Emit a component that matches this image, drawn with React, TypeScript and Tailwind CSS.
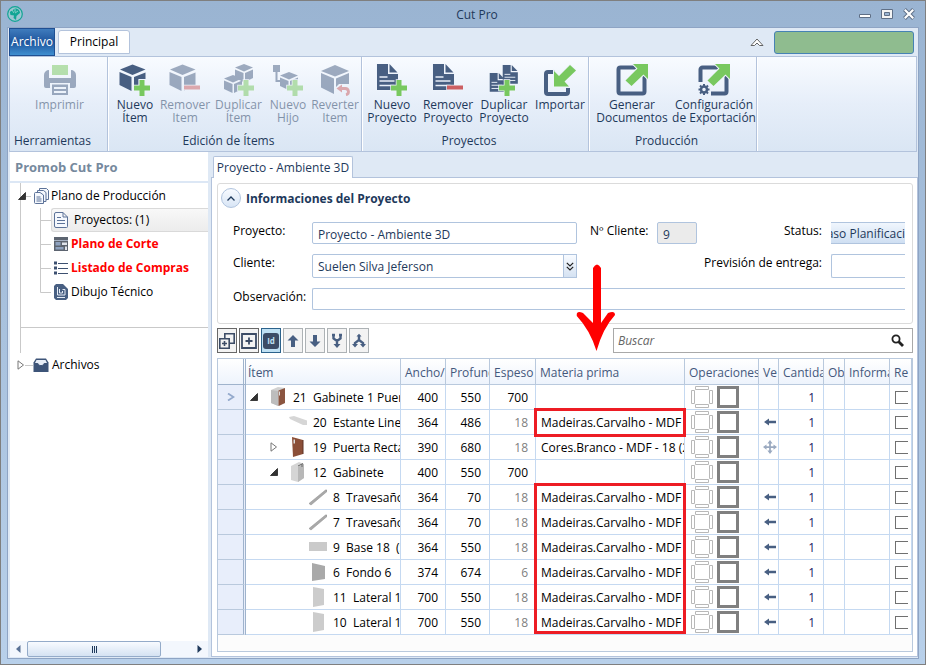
import type { ReactNode } from "react";

const NAVY = "#485f82";
const GREEN = "#78c85f";
const RED = "#cc5f62";

function Cube({ cut = false }: { cut?: boolean }) {
  return (
    <g fill={NAVY}>
      <path d="M13.500 0.500 26.500 5.500 13.500 11 1 5.500z" />
      <path d="M0.500 8 12.500 13v14L0.500 21z" />
      {cut ? <path d="M15 13 26.500 8.500V15h-7v6H15z" /> : <path d="M15 13 26.500 8.500V21L15 26.500z" />}
    </g>
  );
}

function SmallCube({ x, y }: { x: number; y: number }) {
  return (
    <g transform={`translate(${x} ${y})`} fill={NAVY}>
      <path d="M9 0 18 3.500 9 7.500 0 3.500z" />
      <path d="M0 5.500 8.500 9v9L0 14z" />
      <path d="M10 9l8-3.500v8.500L10 18z" />
    </g>
  );
}

function Sheet({ scale = 1, x = 0, y = 0 }: { scale?: number; x?: number; y?: number }) {
  return (
    <g transform={`translate(${x} ${y}) scale(${scale})`}>
      <path d="M1 0h11v10h10v16H1z" fill={NAVY} stroke="#eef4fb" strokeWidth="1.500" paintOrder="stroke" />
      <path d="M13.500 0 21.500 8.500h-8z" fill={NAVY} />
      <path d="M3.500 13h8M3.500 17h15M3.500 21.500h15" stroke="#e9f0f9" strokeWidth="1.300" fill="none" />
    </g>
  );
}

function Plus({ x = 15, y = 16 }: { x?: number; y?: number }) {
  return (
    <g transform={`translate(${x} ${y})`}>
      <path d="M5.500 0h5v5.500H16v5h-5.500V16h-5v-5.500H0v-5h5.500z" fill={GREEN} stroke="#eef4fb" strokeWidth="1.500" paintOrder="stroke" />
    </g>
  );
}

function Minus() {
  return <path d="M15 21.500h16v4H15z" fill={RED} stroke="#eef4fb" strokeWidth="1.500" paintOrder="stroke" />;
}

function ExportArrow() {
  return <path d="M17 0h15v15l-4.500-4.500L15.500 22 9.500 16.500 21.500 4.500z" fill={GREEN} stroke="#eef4fb" strokeWidth="2" paintOrder="stroke" />;
}

function RibbonIcon({ children }: { children: ReactNode }) {
  return (
    <svg viewBox="0 0 32 32" className="h-8 w-8 shrink-0" aria-hidden="true">
      {children}
    </svg>
  );
}

const icons = {
  print: (
    <>
      <path d="M8 1h16v10H8z" fill={GREEN} />
      <path d="M0 11a5 5 0 0 1 5-5v8h22V6a5 5 0 0 1 5 5v11a2 2 0 0 1-2 2h-4v-5H6v5H2a2 2 0 0 1-2-2z" fill={NAVY} />
      <path d="M8 20.500h16V31H8z" fill={NAVY} />
      <path d="M10 24h12M10 28h12" stroke="#eef4fb" strokeWidth="2" />
    </>
  ),
  newItem: (
    <>
      <Cube cut />
      <Plus />
    </>
  ),
  removeItem: (
    <>
      <Cube />
      <Minus />
    </>
  ),
  duplicateItem: (
    <>
      <SmallCube x={12} y={0} />
      <SmallCube x={1} y={11} />
      <Plus />
    </>
  ),
  child: (
    <>
      <path d="M1 1h7v7H1z" fill={NAVY} />
      <path d="M4.500 7v10H9" fill="none" stroke={NAVY} strokeWidth="2" />
      <SmallCube x={8} y={8} />
      <Plus />
    </>
  ),
  revert: (
    <>
      <path d="M16 1 30 7 16 12.500 2 7z" fill={NAVY} />
      <path d="M2 9l13 5.500V30L2 23.500z" fill={NAVY} />
      <path d="M17 14.500 30 9v11H20l-3 3z" fill={NAVY} />
      <path d="M21 24.500h5a3.200 3.200 0 0 1 1 6.300" fill="none" stroke={RED} strokeWidth="2.800" />
      <path d="M17.500 24.500l5.500-4v8z" fill={RED} />
    </>
  ),
  newProject: (
    <>
      <Sheet />
      <Plus />
    </>
  ),
  removeProject: (
    <>
      <Sheet />
      <Minus />
    </>
  ),
  duplicateProject: (
    <>
      <Sheet scale={0.72} x={14} y={1} />
      <Sheet scale={0.72} x={1} y={9} />
      <Plus x={11} />
    </>
  ),
  import: (
    <>
      <path d="M11 8H4a2 2 0 0 0-2 2v18a2 2 0 0 0 2 2h18a2 2 0 0 0 2-2v-4" fill="none" stroke={NAVY} strokeWidth="4" />
      <path d="M26 1l6 5.500-11.500 11 4.500 5H10V7l5 5z" fill={GREEN} stroke="#eef4fb" strokeWidth="2" paintOrder="stroke" />
    </>
  ),
  generate: (
    <>
      <rect x="2.500" y="3.500" width="26" height="26" rx="2" fill="none" stroke={NAVY} strokeWidth="4" />
      <ExportArrow />
    </>
  ),
  configure: (
    <>
      <path d="M2.500 18V5.500a2 2 0 0 1 2-2h22a2 2 0 0 1 2 2v22a2 2 0 0 1-2 2H13" fill="none" stroke={NAVY} strokeWidth="4" />
      <ExportArrow />
      <circle cx="6" cy="25.500" r="3" fill="none" stroke={NAVY} strokeWidth="2.500" />
      <path d="M6 20v2M6 29v2M.5 25.500h2M9.500 25.500h2M2 21.500l1.500 1.500M8.500 28l1.500 1.500M10 21.500 8.500 23M3.500 28 2 29.500" stroke={NAVY} strokeWidth="2" />
    </>
  ),
};

type RibbonAction = {
  icon: keyof typeof icons;
  lines: string[];
  width: string;
  disabled?: boolean;
};

const ribbonGroups: { title: string; width: string; actions: RibbonAction[] }[] = [
  {
    title: "Herramientas",
    width: "w-[98px]",
    actions: [{ icon: "print", lines: ["Imprimir"], width: "w-[94px]", disabled: true }],
  },
  {
    title: "Edición de Ítems",
    width: "w-[254px]",
    actions: [
      { icon: "newItem", lines: ["Nuevo", "Ítem"], width: "w-[50px]" },
      { icon: "removeItem", lines: ["Remover", "Item"], width: "w-[50px]", disabled: true },
      { icon: "duplicateItem", lines: ["Duplicar", "Ítem"], width: "w-[57px]", disabled: true },
      { icon: "child", lines: ["Nuevo", "Hijo"], width: "w-[42px]", disabled: true },
      { icon: "revert", lines: ["Reverter", "Item"], width: "w-[52px]", disabled: true },
    ],
  },
  {
    title: "Proyectos",
    width: "w-[227px]",
    actions: [
      { icon: "newProject", lines: ["Nuevo", "Proyecto"], width: "w-[56px]" },
      { icon: "removeProject", lines: ["Remover", "Proyecto"], width: "w-[56px]" },
      { icon: "duplicateProject", lines: ["Duplicar", "Proyecto"], width: "w-[56px]" },
      { icon: "import", lines: ["Importar"], width: "w-[56px]" },
    ],
  },
  {
    title: "Producción",
    width: "w-[168px]",
    actions: [
      { icon: "generate", lines: ["Generar", "Documentos"], width: "w-[81px]" },
      { icon: "configure", lines: ["Configuración", "de Exportación"], width: "w-[83px]" },
    ],
  },
];

function RibbonButton({ action }: { action: RibbonAction }) {
  return (
    <button
      type="button"
      disabled={action.disabled}
      className={`flex shrink-0 flex-col items-center gap-0.5 whitespace-nowrap leading-[13px] ${action.width} ${action.disabled ? "opacity-50" : ""}`}
    >
      <RibbonIcon>{icons[action.icon]}</RibbonIcon>
      <span>
        {action.lines.map((line) => (
          <span key={line} className="block">
            {line}
          </span>
        ))}
      </span>
    </button>
  );
}

function Ribbon() {
  return (
    <div className="mx-px flex h-24 border border-[#b3c3dc] bg-linear-to-b from-[#f8fbff] via-[#e6eef9] to-[#dae6f4] text-[#1e395b]">
      {ribbonGroups.map((group) => (
        <div key={group.title} className={`flex shrink-0 flex-col justify-between border-r border-[#b3c3dc] pt-[7px] pb-0.5 pl-0.5 shadow-[1px_0_0_#ffffff] ${group.width}`}>
          <div className="flex justify-center">
            {group.actions.map((action) => (
              <RibbonButton key={action.icon} action={action} />
            ))}
          </div>
          <div className="pr-3.5 text-center leading-4">{group.title}</div>
        </div>
      ))}
    </div>
  );
}

function TitleBar() {
  return (
    <header className="flex h-[26px] items-center pr-2.5 pl-1.5 text-[#1e395b]">
      <svg viewBox="0 0 16 16" className="h-4 w-4" aria-hidden="true">
        <circle cx="8" cy="8" r="7.300" fill="#9cc6d2" stroke="#12a594" strokeWidth="1.200" />
        <path d="M8 2.500c3 0 5 2 5 4.500L9.500 10 9 14 6.500 12 7 9.500 3.500 9 2.800 6z" fill="#12a594" />
        <path d="M5 4l2 3M8 3v3M11 5 8 7" stroke="#b6e2dc" strokeWidth=".7" />
      </svg>
      <h1 className="flex-1 pt-0.5 pl-[72px] text-center">Cut Pro</h1>
      <div className="flex items-center gap-2.5">
        <button type="button" aria-label="Minimizar">
          <svg viewBox="0 0 12 12" className="h-3 w-3">
            <path d="M.5 6.500h11v3H.5z" fill="#fff" stroke="#5f6f86" />
          </svg>
        </button>
        <button type="button" aria-label="Maximizar">
          <svg viewBox="0 0 12 12" className="h-3 w-3">
            <path d="M.5 1.500h11v9H.5z" fill="#f4f4f4" stroke="#5f6f86" />
            <path d="M3.500 4.500h5v3h-5z" fill="#9ab4d2" stroke="#5f6f86" />
          </svg>
        </button>
        <button type="button" aria-label="Cerrar">
          <svg viewBox="0 0 12 12" className="h-3 w-3">
            <path d="M1.500 1.500l9 9M10.500 1.500l-9 9" stroke="#5f6f86" strokeWidth="4" />
            <path d="M1.800 1.800l8.400 8.400M10.200 1.800l-8.400 8.400" stroke="#fff" strokeWidth="2.200" />
          </svg>
        </button>
      </div>
    </header>
  );
}

function RibbonTabs() {
  return (
    <nav className="flex h-7 items-center pr-1 pl-px">
      <button type="button" className="h-7 w-[46px] shrink-0 self-start border border-[#1f4f92] bg-linear-to-b from-[#3f7cbd] via-[#1f559d] to-[#3f8fd0] text-center text-white">
        Archivo
      </button>
      <button type="button" className="ml-[3px] h-6 w-[72px] rounded-t-[3px] border border-[#b3c3dc] bg-white text-black">
        Principal
      </button>
      <button type="button" aria-label="Contraer" className="mr-2.5 ml-auto">
        <svg viewBox="0 0 14 8" className="h-2 w-3.5">
          <path d="M1 7.500 7 1l6 6.500H9.500L7 5 4.500 7.500z" fill="#fff" stroke="#555" strokeWidth=".9" />
        </svg>
      </button>
      <div className="h-[23px] w-[140px] rounded-[3px] border border-[#4682b4] bg-[#8fbc8f]" />
    </nav>
  );
}

function Connector({ last }: { last?: boolean }) {
  return (
    <svg viewBox="0 0 11 24" className="h-6 w-[11px] shrink-0" aria-hidden="true">
      <path d={last ? "M.5 0v12.500H11" : "M.5 0v24M.5 12.500H11"} fill="none" stroke="#c9c9c9" />
    </svg>
  );
}

function SheetIcon() {
  return (
    <svg viewBox="0 0 16 16" className="h-4 w-4">
      <path d="M3 .5h7l4.500 4.500v9.500a1 1 0 0 1-1 1H3a1.500 1.500 0 0 1-1.500-1.500V2A1.500 1.500 0 0 1 3 .5zM10 .5V5h4.500" fill="#f5f8fd" stroke="#5d7399" />
      <path d="M4 5.500h4M4 8.500h8M4 11.500h8" stroke="#5d7399" />
    </svg>
  );
}

const treeItems = [
  { label: "Proyectos: (1)", selected: true, alert: false, icon: <SheetIcon /> },
  {
    label: "Plano de Corte",
    alert: true,
    icon: (
      <svg viewBox="0 0 16 16" className="h-4 w-4">
        <path d="M1 1h14v14H1z" fill="#5c6470" />
        <path d="M2.500 6h5v3.500h-5zM2.500 11h8v2.500h-8z" fill="#8ea2c0" />
        <path d="M1 4.500h14" stroke="#b9c6da" strokeWidth=".8" />
        <path d="M9 6.500h5V9H9zM12 10.500h2V14h-2z" fill="#dfe4ec" />
      </svg>
    ),
  },
  {
    label: "Listado de Compras",
    alert: true,
    icon: (
      <svg viewBox="0 0 16 16" className="h-4 w-4">
        <path d="M1 1.500h3v3H1zM1 6.500h3v3H1zM1 11.500h3v3H1z" fill="#3d5070" />
        <path d="M5 3.500h10M5 8.500h10M5 13.500h10" stroke="#3d5070" />
      </svg>
    ),
  },
  {
    label: "Dibujo Técnico",
    icon: (
      <svg viewBox="0 0 16 16" className="h-4 w-4">
        <path d="M3 0h7l5 5v9l-2 2H3l-2-2V2z" fill="#485f82" />
        <path d="M4.500 3v8h7.500V5.500H9.500M6.500 5v4h3V7M4 13.500h8" fill="none" stroke="#e5ecf6" />
      </svg>
    ),
  },
];

function Caret({ open }: { open: boolean }) {
  return (
    <svg viewBox="0 0 8 10" className="h-2.5 w-2 shrink-0" aria-hidden="true">
      {open ? <path d="M7.500 1.500v7h-7z" fill="#333" stroke="#222" strokeWidth=".8" /> : <path d="M1 .8 6.500 5 1 9.200z" fill="#fff" stroke="#777" />}
    </svg>
  );
}

function Sidebar() {
  return (
    <aside className="flex w-[198px] shrink-0 flex-col bg-white">
      <h2 className="h-[31px] border-b-2 border-[#dce7f5] pt-px pl-[5px] text-[13px] leading-7 font-bold text-[#76899d]">Promob Cut Pro</h2>
      <div className="ml-2.5 border-l border-[#c9c9c9] pt-px text-black">
        <button type="button" className="-ml-[3px] flex h-6 items-center">
          <Caret open />
          <span className="h-px w-[5px] bg-[#c9c9c9]" />
          <svg viewBox="0 0 16 16" className="ml-0.5 h-4 w-4">
            <g fill="#f5f8fd" stroke="#5d7399">
              <path d="M6.500.5h7l2 2v9h-9z" />
              <path d="M4.500 2.500h6l2.500 2v9h-8.500z" />
              <path d="M1.500 5.500a1 1 0 0 1 1-1H7L10.500 7v8.500h-8a1 1 0 0 1-1-1z" />
              <path d="M3.500 9h4M3.500 11h5M3.500 13h5" />
            </g>
          </svg>
          <span className="ml-0.5">Plano de Producción</span>
        </button>
        <ul className="ml-[19px]">
          {treeItems.map((item, i) => (
            <li key={item.label} className="flex h-6 items-center">
              <Connector last={i === treeItems.length - 1} />
              <button
                type="button"
                className={`flex h-6 flex-1 items-center whitespace-nowrap ${item.selected ? "gap-[5px] rounded-l-[3px] border border-r-0 border-[#d9d9d9] bg-linear-to-b from-[#f8f8f8] to-[#ececec] pl-px" : "gap-0.5 pl-0.5"} ${item.alert ? "font-bold text-[#ff0000]" : ""}`}
              >
                {item.icon}
                <span>{item.label}</span>
              </button>
            </li>
          ))}
        </ul>
        <div className="mt-[23px] h-[26px] border-t border-[#c9c9c9]" />
      </div>
      <button type="button" className="ml-[7px] flex h-6 items-center self-start text-black">
        <Caret open={false} />
        <span className="h-px w-2 bg-[#c9c9c9]" />
        <svg viewBox="0 0 16 16" className="h-4 w-4">
          <path d="M3 1.500h10l2.500 4V15H.5V5.500z" fill="#3d5478" />
          <path d="M2 6h12l-1.500-3h-9z" fill="#e8eef8" />
          <path d="M4.500 6c1 3.500 6 3.500 7 0" fill="#e8eef8" stroke="#3d5478" />
        </svg>
        <span className="ml-[3px]">Archivos</span>
      </button>
      <div className="mt-auto flex h-4 items-center bg-[#f3f7fd] px-1.5">
        <button type="button" aria-label="Izquierda">
          <svg viewBox="0 0 5 8" className="h-2 w-[5px]">
            <path d="M4.500 0v8L0 4z" fill="#5a7296" />
          </svg>
        </button>
        <div className="ml-1.5 flex h-4 w-[134px] items-center justify-center rounded-[2px] border border-[#94abc9] bg-linear-to-b from-[#f8fbff] to-[#d5e2f2]">
          <span className="flex h-[7px] w-[5px] justify-center border-x border-[#1e395b]">
            <span className="w-px bg-[#1e395b]" />
          </span>
        </div>
        <button type="button" aria-label="Derecha" className="ml-auto">
          <svg viewBox="0 0 5 8" className="h-2 w-[5px]">
            <path d="M.5 0v8L5 4z" fill="#1e395b" />
          </svg>
        </button>
      </div>
    </aside>
  );
}

const inputClass = "rounded-[2px] border border-[#b0c4de] bg-white px-[5px] pt-0.5 text-[#1e395b]";
const labelClass = "pt-px whitespace-nowrap";

function ProjectForm() {
  return (
    <section className="h-[141px] rounded-[3px] border border-[#dbdbdb] pr-[7px] pl-[15px]">
      <div className="-ml-3 flex h-7 items-center gap-[5px]">
        <button
          type="button"
          aria-label="Contraer"
          className="flex h-5 w-5 items-center justify-center rounded-full border border-[#b0c4de] bg-linear-to-b from-[#f8fbff] to-[#d8e5f5]"
        >
          <svg viewBox="0 0 8 5" className="h-[5px] w-2">
            <path d="M.5 4.500 4 1l3.500 3.500" fill="none" stroke="#1e395b" strokeWidth="1.300" />
          </svg>
        </button>
        <h3 className="pt-px font-bold text-[#1e395b]">Informaciones del Proyecto</h3>
      </div>
      <div className="mt-2.5 flex items-start">
        <label htmlFor="project" className={`w-[79px] ${labelClass}`}>Proyecto:</label>
        <input id="project" defaultValue="Proyecto - Ambiente 3D" className={`h-[22px] w-[265px] ${inputClass}`} />
        <label htmlFor="client-no" className={`ml-[13px] w-[67px] ${labelClass}`}>Nº Cliente:</label>
        <input id="client-no" readOnly defaultValue="9" className="h-[22px] w-10 rounded-[2px] border border-[#b0c4de] bg-[#ebebeb] px-[5px] pt-0.5 text-[#1e395b]" />
        <span className={`ml-auto pr-[9px] ${labelClass}`}>Status:</span>
        <button type="button" className="flex h-[22px] w-[74px] justify-end overflow-hidden border-y border-[#b0c4de] bg-linear-to-b from-[#f0f6fd] to-[#cfdff2] whitespace-nowrap text-[#1e395b]">
          <span className="pt-[3px]">aso Planificaci</span>
        </button>
      </div>
      <div className="mt-2.5 flex items-start">
        <label htmlFor="client" className={`w-[79px] ${labelClass}`}>Cliente:</label>
        <div className="relative w-[265px]">
          <select id="client" className={`h-6 w-full appearance-none ${inputClass}`}>
            <option>Suelen Silva Jeferson</option>
          </select>
          <span className="pointer-events-none absolute inset-y-0 right-0 flex w-3.5 items-center justify-center border border-[#b0c4de] bg-linear-to-b from-[#f8fbff] to-[#d5e2f2]">
            <svg viewBox="0 0 8 9" className="h-[9px] w-2">
              <path d="M.8.8 4 4 7.200.8M.8 4.800 4 8l3.200-3.200" fill="none" stroke="#222" strokeWidth="1.200" />
            </svg>
          </span>
        </div>
        <label htmlFor="delivery" className={`ml-auto pr-[9px] ${labelClass}`}>Previsión de entrega:</label>
        <input id="delivery" className="h-6 w-[74px] rounded-l-[2px] border border-r-0 border-[#b0c4de] bg-white px-[5px]" />
      </div>
      <div className="mt-2.5 flex items-start">
        <label htmlFor="notes" className={`w-[79px] ${labelClass}`}>Observación:</label>
        <input id="notes" className="h-[22px] flex-1 rounded-l-[2px] border border-r-0 border-[#b0c4de] bg-white px-[5px]" />
      </div>
    </section>
  );
}

const tools = [
  {
    label: "Duplicar",
    style: "border-[#686868] bg-[#f3f3f3]",
    icon: (
      <g fill="#f3f3f3" stroke="#3c4c66" strokeWidth="1.600">
        <path d="M5.800.8h9.400v9.400H5.800z" />
        <path d="M.8 5.800h9.400v9.400H.8zM5.500 8v5M3 10.500h5" />
      </g>
    ),
  },
  {
    label: "Agregar",
    style: "border-[#686868] bg-[#f3f3f3]",
    icon: <path d="M1 1h14v14H1zM8 4.500v7M4.500 8h7" fill="none" stroke="#3c4c66" strokeWidth="1.800" />,
  },
  { label: "Id", style: "border-[#2c628b] bg-[#bfe0f3]", icon: null },
  { label: "Subir", style: "border-[#adb2b5] bg-[#f3f3f3]", icon: <path d="M8 2 13.500 7.500H10V14H6V7.500H2.500z" fill={NAVY} /> },
  { label: "Bajar", style: "border-[#adb2b5] bg-[#f3f3f3]", icon: <path d="M8 14 2.500 8.500H6V2h4v6.500h3.500z" fill={NAVY} /> },
  {
    label: "Unir",
    style: "border-[#adb2b5] bg-[#f3f3f3]",
    icon: (
      <>
        <path d="M4.500 2v3.500L8 8l3.500-2.500V2M8 8v4M3 2h3M10 2h3" fill="none" stroke={NAVY} strokeWidth="2.400" />
        <path d="M4.500 11h7L8 15z" fill={NAVY} />
      </>
    ),
  },
  {
    label: "Separar",
    style: "border-[#adb2b5] bg-[#f3f3f3]",
    icon: (
      <>
        <path d="M8 2v5L4 10v2M8 7l4 3v2" fill="none" stroke={NAVY} strokeWidth="2.400" />
        <path d="M5.500 3.500 8 .8l2.500 2.700zM1 11h6l-3 3.500zM9 11h6l-3 3.500z" fill={NAVY} />
      </>
    ),
  },
];

function Toolbar() {
  return (
    <div className="mt-1 flex items-center gap-0.5">
      {tools.map((tool) => (
        <button key={tool.label} type="button" aria-label={tool.label} className={`flex h-[25px] w-5 items-center justify-center border ${tool.style}`}>
          {tool.icon ? (
            <svg viewBox="0 0 16 16" className="h-4 w-4 shrink-0">{tool.icon}</svg>
          ) : (
            <span className="flex h-4 w-4 shrink-0 items-center justify-center rounded-[3px] bg-[#3c4c66] text-[8px] leading-none font-bold text-[#bfe0f3]">Id</span>
          )}
        </button>
      ))}
      <div className="ml-auto flex h-[25px] w-[300px] items-center border border-[#a9a9a9] bg-white pr-2">
        <input aria-label="Buscar" placeholder="Buscar" className="min-w-0 flex-1 px-1 italic outline-none placeholder:text-[#666666]" />
        <svg viewBox="0 0 13 13" className="h-[13px] w-[13px]" aria-hidden="true">
          <circle cx="5" cy="5" r="3.600" fill="none" stroke="#222" strokeWidth="1.800" />
          <path d="M7.500 7.500 12 12" stroke="#222" strokeWidth="2.800" />
        </svg>
      </div>
    </div>
  );
}

const shapes = {
  cabinet: (
    <>
      <path d="M2 3 9 0l7 1v15l-6 3-8-3z" fill="#d2d2d2" />
      <path d="M2 3l7 1v15l-7-3z" fill="#bdbdbd" />
      <path d="M9.500 3.500 16 1v15l-6.500 3z" fill="#8b5540" />
      <path d="M10.500 4.500v4" stroke="#ddd" />
    </>
  ),
  shelf: <path d="M0 5l5-1 13 4.500V13h-4L1 7z" fill="#d6d6d6" />,
  door: (
    <>
      <path d="M3 0l11 3v14L4 20z" fill="#8b4f38" />
      <path d="M4.500 2.500h1.500v4H4.500z" fill="#ddd" />
      <path d="M14 3v14" stroke="#5d3325" />
    </>
  ),
  box: (
    <>
      <path d="M2 4 10 0l5 2v14l-6 4-7-2z" fill="#d5d5d5" />
      <path d="M9 5v15l6-4V2z" fill="#b8b8b8" />
      <path d="M9 4 14 1.500M13 2v3" stroke="#666" />
    </>
  ),
  bar: <path d="M0 16.500 16.500 3H18v1.500L2 18z" fill="#a9a9a9" stroke="#8a8a8a" strokeWidth=".5" />,
  base: <path d="M0 5h18v9H0z" fill="#cacaca" />,
  back: <path d="M3 1l13 3v13L3 19z" fill="#a9a9a9" />,
  side: <path d="M4 0l11 2v16L4 20z" fill="#cccccc" />,
};

type Row = {
  name: string;
  shape: keyof typeof shapes;
  indent: string;
  caret?: "open" | "closed";
  size: [number, number, number];
  material?: string;
  vein?: "left" | "all";
  mark?: string;
};

const MDF = "Madeiras.Carvalho - MDF -";

const rows: Row[] = [
  { name: "21  Gabinete 1 Puert", shape: "cabinet", indent: "pl-1", caret: "open", size: [400, 550, 700] },
  { name: "20  Estante Linea", shape: "shelf", indent: "pl-6", size: [364, 486, 18], material: MDF, vein: "left", mark: "h-[29px]" },
  { name: "19  Puerta Recta", shape: "door", indent: "pl-6", caret: "closed", size: [390, 680, 18], material: "Cores.Branco - MDF - 18 (2", vein: "all" },
  { name: "12  Gabinete", shape: "box", indent: "pl-6", caret: "open", size: [400, 550, 700] },
  { name: "8  Travesaño", shape: "bar", indent: "pl-11", size: [364, 70, 18], material: MDF, vein: "left", mark: "h-[151px]" },
  { name: "7  Travesaño", shape: "bar", indent: "pl-11", size: [364, 70, 18], material: MDF, vein: "left" },
  { name: "9  Base 18  (S", shape: "base", indent: "pl-11", size: [364, 550, 18], material: MDF, vein: "left" },
  { name: "6  Fondo 6", shape: "back", indent: "pl-11", size: [374, 674, 6], material: MDF, vein: "left" },
  { name: "11  Lateral 18", shape: "side", indent: "pl-11", size: [700, 550, 18], material: MDF, vein: "left" },
  { name: "10  Lateral 18", shape: "side", indent: "pl-11", size: [700, 550, 18], material: MDF, vein: "left" },
];

const columns = [
  { label: "Ítem", width: "", pad: "pl-0.5" },
  { label: "Ancho/", width: "w-[45px]", pad: "pl-1" },
  { label: "Profund", width: "w-[44px]", pad: "pl-1" },
  { label: "Espeso", width: "w-[46px]", pad: "pl-1" },
  { label: "Materia prima", width: "w-[149px]", pad: "pl-1" },
  { label: "Operaciones", width: "w-[74px]", pad: "pl-1" },
  { label: "Ve", width: "w-5", pad: "pl-1" },
  { label: "Cantida", width: "w-[45px]", pad: "pl-1" },
  { label: "Ob", width: "w-[21px]", pad: "pl-1" },
  { label: "Informa", width: "w-[45px]", pad: "pl-1" },
  { label: "Re", width: "w-[22px]", pad: "pl-1" },
];

function VeinIcon({ kind }: { kind: "left" | "all" }) {
  return kind === "left" ? (
    <svg viewBox="0 0 12 8" className="h-2 w-3">
      <path d="M0 4l5-3.500v2.300h7v2.400H5v2.300z" fill={NAVY} />
    </svg>
  ) : (
    <svg viewBox="0 0 16 16" className="h-4 w-3.5">
      <path d="M0 8l4-3v2h3V4H5l3-4 3 4H9v3h3V5l4 3-4 3V9H9v3h2l-3 4-3-4h2V9H4v2z" fill="#9aa9c0" />
    </svg>
  );
}

function OperationIcons() {
  return (
    <svg viewBox="0 0 50 24" className="h-6 w-[50px]" aria-hidden="true">
      <path d="M5.500 1.500h13v3h-13zM5.500 19.500h13v3h-13zM1.500 5.500h3v13h-3zM19.500 5.500h3v13h-3z" fill="#fff" stroke="#b8b8b8" />
      <rect x="28.500" y="2.500" width="19" height="19" fill="#fff" stroke="#808080" strokeWidth="3" />
    </svg>
  );
}

const cell = "h-[25px] overflow-hidden border-r border-b border-[#c5d9f1] p-0";

function ItemsTable() {
  return (
    <div className="mt-[5px] flex flex-1 flex-col border border-[#b9c9dd] bg-[#fcfcfc]">
      <table className="w-full table-fixed border-separate border-spacing-0 bg-white text-black">
        <thead>
          <tr className="bg-linear-to-b from-white to-[#edf3fc] text-left text-[#44587c]">
            <th className="h-[26px] w-7 border-r-3 border-b border-double border-[#9fb3cc] p-0" />
            {columns.map((col) => (
              <th key={col.label} className={`relative h-[26px] border-r border-b border-[#b9c9dd] p-0 pt-0.5 font-normal ${col.width}`}>
                <div className={`overflow-hidden whitespace-nowrap ${col.pad}`}>{col.label}</div>
                {col.label === "Materia prima" && (
                  <svg viewBox="0 0 40 90" className="absolute bottom-8 left-10 h-[90px] w-10" aria-hidden="true">
                    <path d="M.8 54Q0 48 7 51L17 61V6q4-7 8 0V61L32 51q7-3 7 2Q27 66 20.500 89 14 68 .8 54z" fill="#ff0000" />
                  </svg>
                )}
              </th>
            ))}
          </tr>
        </thead>
        <tbody>
          {rows.map((row, i) => (
            <tr key={row.name}>
              <td className="h-[25px] border-r-3 border-b border-r-[#9fb3cc] border-b-[#b9c9dd] bg-[#e8eefb] p-0 text-center [border-right-style:double]">
                {i === 0 && (
                  <svg viewBox="0 0 8 8" className="mx-auto h-2 w-2">
                    <path d="M1 .5 6.500 4 1 7.500" fill="none" stroke="#93a9cc" strokeWidth="1.800" />
                  </svg>
                )}
              </td>
              <td className={cell}>
                <div className={`flex items-center overflow-hidden whitespace-pre ${row.indent}`}>
                  <span className="flex w-2 shrink-0">{row.caret && <Caret open={row.caret === "open"} />}</span>
                  <svg viewBox="0 0 18 20" className="ml-[11px] h-5 w-[18px] shrink-0" aria-hidden="true">{shapes[row.shape]}</svg>
                  <span className="ml-1.5 pt-0.5">{row.name}</span>
                </div>
              </td>
              {row.size.map((value, n) => (
                <td key={n} className={`${cell} text-right ${n === 1 ? "pr-2" : "pr-[7px]"} ${n === 2 && value < 100 ? "text-[#808080]" : ""}`}>
                  <div className="pt-0.5">{value}</div>
                </td>
              ))}
              <td className="relative h-[25px] border-r border-b border-[#c5d9f1] p-0 pl-[5px]">
                <div className="overflow-hidden pt-0.5 whitespace-nowrap">{row.material}</div>
                {row.mark && <div className={`absolute -top-[2px] -right-[2px] -left-[2px] z-10 border-3 border-[#ed1c24] ${row.mark}`} />}
              </td>
              <td className={cell}>
                <div className="pl-[5px]">
                  <OperationIcons />
                </div>
              </td>
              <td className={cell}>
                <div className="flex justify-center pl-0.5">{row.vein && <VeinIcon kind={row.vein} />}</div>
              </td>
              <td className={`${cell} pr-2 text-right text-[#1b1464]`}>
                <div className="pt-0.5">1</div>
              </td>
              <td className={cell} />
              <td className={cell} />
              <td className={`${cell} pl-[5px]`}>
                <div className="w-[13px] overflow-hidden">
                  <input type="checkbox" aria-label={`Ref ${i + 1}`} className="block h-[13px] w-4 appearance-none border border-[#707070] bg-white" />
                </div>
              </td>
            </tr>
          ))}
        </tbody>
      </table>
    </div>
  );
}

export default function App() {
  return (
    <div className="flex min-h-screen flex-col border border-[#7f7f7f] bg-linear-to-b from-[#9ab4d2] to-[#b8d0ea] font-['Open_Sans','Noto_Sans',sans-serif] text-[12px] leading-4 text-black">
      <TitleBar />
      <div className="mx-1.5 mb-[5px] flex flex-1 flex-col border border-[#8ea4c4] bg-[#dfe9f5]">
        <RibbonTabs />
        <Ribbon />
        <main className="flex flex-1 gap-[3px] pb-px pl-0.5">
          <Sidebar />
          <div className="flex min-w-0 flex-1 flex-col pt-1">
            <div className="flex pl-0.5">
              <button type="button" className="relative z-10 -mb-px h-[22px] w-[140px] rounded-t-[2px] border border-b-0 border-[#b3c3dc] bg-white whitespace-nowrap text-[#1e395b]">
                Proyecto - Ambiente 3D
              </button>
            </div>
            <div className="flex flex-1 flex-col border border-[#b3c3dc] bg-white pt-[5px] pr-1 pb-1 pl-[5px]">
              <ProjectForm />
              <Toolbar />
              <ItemsTable />
            </div>
          </div>
        </main>
      </div>
    </div>
  );
}
